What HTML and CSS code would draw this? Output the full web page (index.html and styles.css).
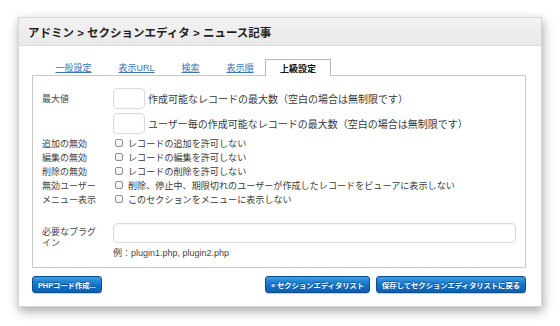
FILE: index.html
```html
<!DOCTYPE html>
<html lang="ja">
<head>
    <meta charset="UTF-8">
    <title>上級設定</title>
    <link rel="stylesheet" href="styles.css">
</head>
<body>
    <div class="window">
        <div class="titlebar">
            <h1>アドミン &gt; セクションエディタ &gt; ニュース記事</h1>
        </div>
        <div class="content">
            <ul class="tabs">
                <li><a href="#">一般設定</a></li>
                <li><a href="#">表示URL</a></li>
                <li><a href="#">検索</a></li>
                <li><a href="#">表示順</a></li>
                <li class="active"><span>上級設定</span></li>
            </ul>
            <div class="panel">
                <div class="row row-input">
                    <span class="label">最大値</span>
                    <input class="num" type="text">
                    <span class="hint">作成可能なレコードの最大数（空白の場合は無制限です）</span>
                </div>
                <div class="row row-input">
                    <span class="label"></span>
                    <input class="num" type="text">
                    <span class="hint">ユーザー毎の作成可能なレコードの最大数（空白の場合は無制限です）</span>
                </div>
                <label class="row row-check first">
                    <span class="label">追加の無効</span>
                    <input type="checkbox">
                    <span class="hint">レコードの追加を許可しない</span>
                </label>
                <label class="row row-check">
                    <span class="label">編集の無効</span>
                    <input type="checkbox">
                    <span class="hint">レコードの編集を許可しない</span>
                </label>
                <label class="row row-check">
                    <span class="label">削除の無効</span>
                    <input type="checkbox">
                    <span class="hint">レコードの削除を許可しない</span>
                </label>
                <label class="row row-check">
                    <span class="label">無効ユーザー</span>
                    <input type="checkbox">
                    <span class="hint">削除、停止中、期限切れのユーザーが作成したレコードをビューアに表示しない</span>
                </label>
                <label class="row row-check">
                    <span class="label">メニュー表示</span>
                    <input type="checkbox">
                    <span class="hint">このセクションをメニューに表示しない</span>
                </label>
                <div class="row row-plugin">
                    <span class="label">必要なプラグイン</span>
                    <div class="field">
                        <input class="wide" type="text">
                        <p class="example">例：plugin1.php, plugin2.php</p>
                    </div>
                </div>
            </div>
            <div class="actions">
                <button>PHPコード作成...</button>
                <div class="right">
                    <button>« セクションエディタリスト</button>
                    <button>保存してセクションエディタリストに戻る</button>
                </div>
            </div>
        </div>
    </div>
</body>
</html>
```

FILE: styles.css
```css
body {
    margin: 0;
    padding: 17px 18px;
    background: #FFFFFF;
    font-family: "Liberation Sans", "Noto Sans CJK JP", sans-serif;
    color: #333333;
}
.window {
    width: 522px;
    height: 288px;
    border: 1px solid #D6D6D6;
    background: #FFFFFF;
    box-shadow: 1px 4px 10px rgba(0, 0, 0, 0.35);
}
.titlebar {
    height: 27px;
    border-bottom: 1px solid #D9D9D9;
    background: linear-gradient(#F2F2F2, #E9E9E9);
    display: flex;
    align-items: center;
    padding-left: 9px;
}
h1 {
    margin: 0;
    font-size: 11.5px;
    font-weight: bold;
    color: #1E1E1E;
}
.content {
    padding: 13px 15px 0 13px;
}
.tabs {
    display: flex;
    list-style: none;
    margin: 0 0 0 10px;
    padding: 0;
    height: 16px;
    font-size: 9px;
}
.tabs li {
    padding: 0 13.5px;
    display: flex;
    align-items: center;
}
.tabs a {
    color: #3A74B6;
    text-decoration: underline;
}
.tabs .active {
    background: #FFFFFF;
    border: 1px solid #B8B8B8;
    border-bottom: none;
    padding: 0 14px;
    margin-left: -2px;
    height: 16px;
    position: relative;
    z-index: 1;
    font-weight: bold;
    color: #111111;
}
.panel {
    border: 1px solid #C9C9C9;
    padding: 12px 0 7px;
    height: 172px;
}
.row {
    display: flex;
    align-items: center;
    font-size: 9.1px;
}
.label {
    width: 71px;
    padding-left: 9px;
    flex-shrink: 0;
    font-size: 9px;
    color: #444444;
}
.hint {
    color: #3A3A3A;
}
.row-input {
    height: 21px;
}
.row-input + .row-input {
    margin-top: 4px;
}
.row-input .hint {
    font-size: 10px;
    margin-left: 3px;
}
.num {
    width: 30px;
    height: 19px;
    margin: 0;
    padding: 0;
    border: 1px solid #DCDCDC;
    border-radius: 4px;
    box-shadow: inset 0 1px 2px rgba(0, 0, 0, 0.05);
}
.row-check {
    height: 14px;
}
.row-check.first {
    margin-top: 2px;
}
.row-check input {
    appearance: none;
    width: 8px;
    height: 8px;
    margin: 0 5px 0 2px;
    border: 1px solid #8E8E8E;
    border-radius: 2px;
    background: linear-gradient(#FFFFFF, #EDEDED);
}
.row-plugin {
    align-items: flex-start;
    margin-top: 17px;
}
.row-plugin .label {
    width: 62px;
    padding-right: 9px;
    line-height: 11px;
    margin-top: 4px;
}
.field {
    flex: 1;
}
.wide {
    display: block;
    width: 401px;
    height: 18px;
    margin: 0;
    padding: 0;
    border: 1px solid #DCDCDC;
    border-radius: 4px;
    box-shadow: inset 0 1px 2px rgba(0, 0, 0, 0.05);
}
.example {
    margin: 4px 0 0;
    line-height: 12px;
    font-size: 9px;
    color: #444444;
}
.actions {
    display: flex;
    justify-content: space-between;
    margin-top: 8px;
}
.right {
    display: flex;
    gap: 6px;
}
button {
    height: 17px;
    padding: 0 5px;
    border: 1px solid #0B4F8E;
    border-radius: 3px;
    background: linear-gradient(#3E9DE2, #1474C8 50%, #0C60AE);
    color: #FFFFFF;
    font-family: "Liberation Sans", "Noto Sans CJK JP", sans-serif;
    font-size: 7.3px;
    font-weight: bold;
    text-shadow: 0 -1px 0 rgba(0, 0, 0, 0.4);
    box-shadow: 0 1px 1px rgba(0, 0, 0, 0.2);
}
```
